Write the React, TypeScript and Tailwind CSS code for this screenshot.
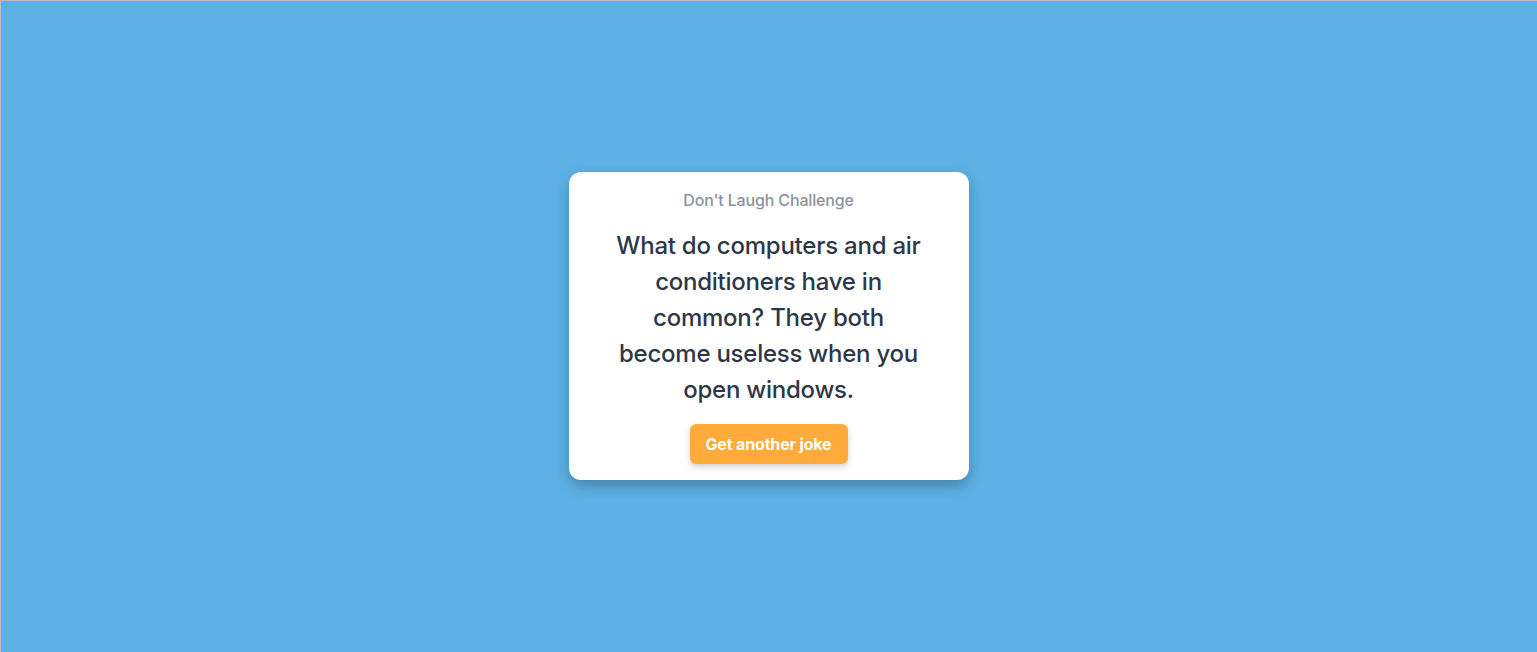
export default function App() {
  return (
    <div className="min-h-[652px] h-screen w-full bg-[#5db1e5] shadow-[inset_1px_1px_0_#b9bdc1] flex items-center justify-center font-['Inter',sans-serif]">
      <div className="w-[400px] bg-white rounded-xl shadow-[0_6px_14px_rgba(0,0,0,0.25)] p-4 flex flex-col items-center text-center">
        <p className="text-base leading-6 font-medium tracking-[-0.01em] text-[#8e939b]">Don't Laugh Challenge</p>
        <p className="mt-4 max-w-[320px] text-2xl leading-9 font-medium tracking-[-0.01em] text-[#2d3748]">
          What do computers and air conditioners have in common? They both become useless when you open windows.
        </p>
        <button className="mt-4 h-10 px-4 rounded-md bg-[#ffaa3a] text-white font-bold text-base tracking-[-0.01em] shadow-[0_3px_6px_rgba(0,0,0,0.18)]">
          Get another joke
        </button>
      </div>
    </div>
  );
}
